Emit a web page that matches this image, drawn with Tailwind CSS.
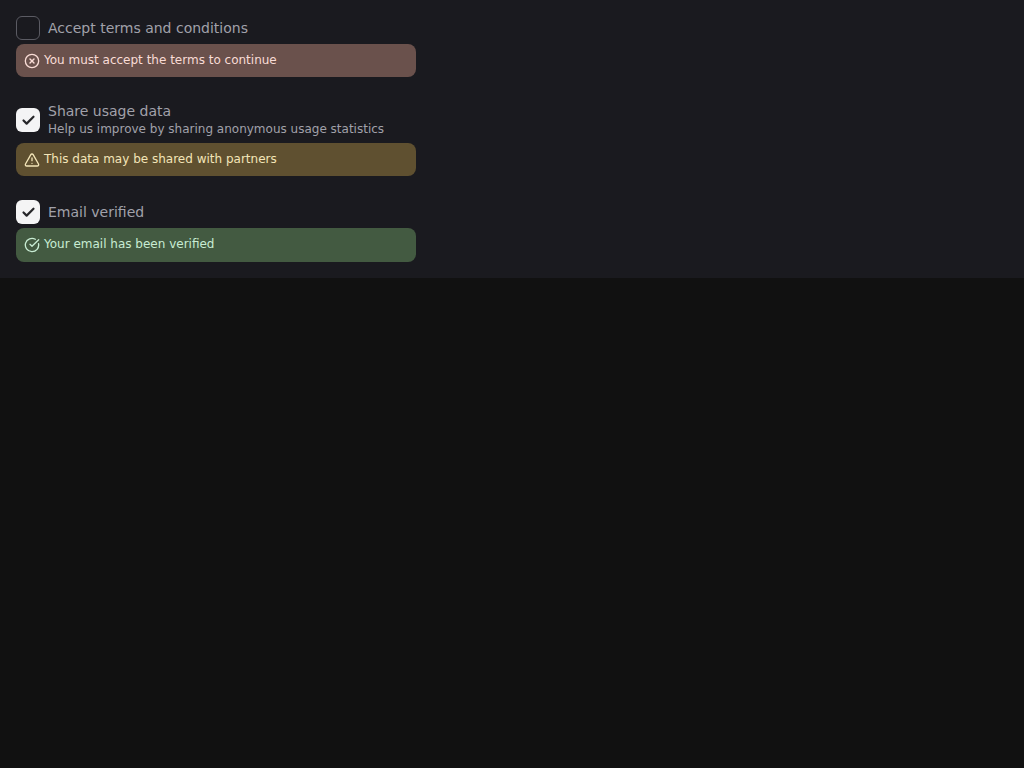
<!DOCTYPE html>
<html lang="en">
<head>
    <meta charset="UTF-8">
    <meta name="viewport" content="width=device-width, initial-scale=1.0">
    <title>Checkbox states</title>
    <script src="https://cdn.jsdelivr.net/npm/@tailwindcss/browser@4"></script>
</head>
<body class="bg-[#111111] min-h-screen font-['DejaVu_Sans',sans-serif]">
    <div class="bg-[#1a1a1f] p-4 flex flex-col gap-6">
        <!-- Error -->
        <div class="flex flex-col gap-1 w-[400px]">
            <label class="flex items-center gap-2">
                <span class="w-6 h-6 rounded-md border border-[#5b5b63] bg-[#1a1a1f] shrink-0"></span>
                <span class="text-sm leading-[21px] text-[#a1a1aa]">Accept terms and conditions</span>
            </label>
            <div class="h-[33.2px] rounded-lg bg-[#6a514c] text-[#f9dcd6] flex items-start gap-1 pl-2 pt-2">
                <svg class="w-4 h-4 mt-px shrink-0" viewBox="0 0 24 24" fill="none" stroke="currentColor" stroke-width="2" stroke-linecap="round" stroke-linejoin="round"><circle cx="12" cy="12" r="10"/><path d="m15 9-6 6"/><path d="m9 9 6 6"/></svg>
                <span class="text-xs leading-[16px]">You must accept the terms to continue</span>
            </div>
        </div>

        <!-- Warning -->
        <div class="flex flex-col gap-1 w-[400px]">
            <label class="flex items-center gap-2">
                <span class="w-6 h-6 rounded-md bg-[#f4f4f5] text-[#27272a] shrink-0 flex items-center justify-center">
                    <svg class="w-[15px] h-[15px]" viewBox="0 0 24 24" fill="none" stroke="currentColor" stroke-width="3.5" stroke-linecap="round" stroke-linejoin="round"><path d="M20 6 9 17l-5-5"/></svg>
                </span>
                <span class="flex flex-col h-[38px]">
                    <span class="text-sm leading-[21px] text-[#a1a1aa]">Share usage data</span>
                    <span class="text-xs leading-[15px] text-[#a1a1aa]">Help us improve by sharing anonymous usage statistics</span>
                </span>
            </label>
            <div class="h-[33.2px] rounded-lg bg-[#5f5030] text-[#f3e5b8] flex items-start gap-1 pl-2 pt-2">
                <svg class="w-4 h-4 mt-px shrink-0" viewBox="0 0 24 24" fill="none" stroke="currentColor" stroke-width="2" stroke-linecap="round" stroke-linejoin="round"><path d="m21.73 18-8-14a2 2 0 0 0-3.48 0l-8 14A2 2 0 0 0 4 21h16a2 2 0 0 0 1.73-3"/><path d="M12 9v4"/><path d="M12 17h.01"/></svg>
                <span class="text-xs leading-[16px]">This data may be shared with partners</span>
            </div>
        </div>

        <!-- Success -->
        <div class="flex flex-col gap-1 w-[400px]">
            <label class="flex items-center gap-2">
                <span class="w-6 h-6 rounded-md bg-[#f4f4f5] text-[#27272a] shrink-0 flex items-center justify-center">
                    <svg class="w-[15px] h-[15px]" viewBox="0 0 24 24" fill="none" stroke="currentColor" stroke-width="3.5" stroke-linecap="round" stroke-linejoin="round"><path d="M20 6 9 17l-5-5"/></svg>
                </span>
                <span class="text-sm leading-[21px] text-[#a1a1aa]">Email verified</span>
            </label>
            <div class="h-[33.2px] rounded-lg bg-[#435a41] text-[#c8ecd3] flex items-start gap-1 pl-2 pt-2">
                <svg class="w-4 h-4 mt-px shrink-0" viewBox="0 0 24 24" fill="none" stroke="currentColor" stroke-width="2" stroke-linecap="round" stroke-linejoin="round"><path d="M21.8 10A10 10 0 1 1 17 3.34"/><path d="m9 11 3 3L22 4"/></svg>
                <span class="text-xs leading-[16px]">Your email has been verified</span>
            </div>
        </div>
    </div>
</body>
</html>
